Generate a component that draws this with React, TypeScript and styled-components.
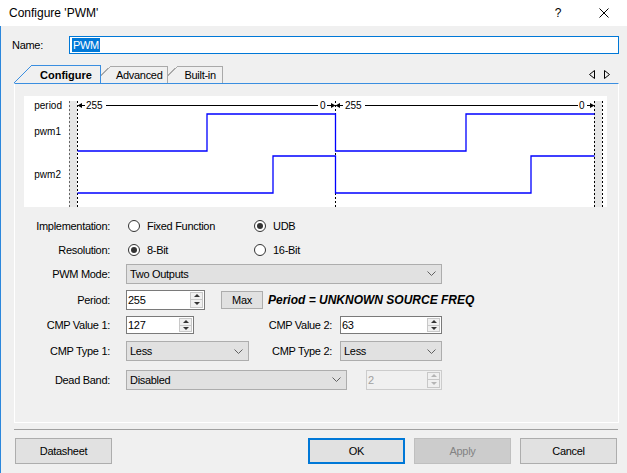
import styled, { createGlobalStyle } from "styled-components";

const GlobalStyle = createGlobalStyle`
  html, body {
    margin: 0;
    padding: 0;
    background: #f0f0f0;
  }
  body {
    font-family: "Liberation Sans", Arial, sans-serif;
    font-size: 11px;
    letter-spacing: -0.3px;
    color: #000;
  }
  * {
    box-sizing: border-box;
  }
`;

// Window frame
const Window = styled.div`
  width: 627px;
  height: 473px;
  display: flex;
  flex-direction: column;
  background: #f0f0f0;
  overflow: hidden;
`;

const TitleBar = styled.div`
  height: 26px;
  flex-shrink: 0;
  background: #fff;
  display: flex;
  align-items: center;
  padding-left: 9px;
`;

const Title = styled.div`
  flex: 1;
  font-size: 12px;
  letter-spacing: 0;
`;

const TitleButton = styled.div`
  width: 46px;
  height: 26px;
  display: flex;
  align-items: center;
  justify-content: center;
  font-size: 12px;
  letter-spacing: 0;
`;

const Body = styled.div`
  flex: 1;
  border-left: 1px solid #2b87dc;
  padding: 10px 8px 0 11px;
  display: flex;
  flex-direction: column;
`;

// Name field
const NameRow = styled.div`
  display: flex;
  align-items: center;
  height: 18px;
`;

const NameLabel = styled.span`
  width: 57px;
`;

const NameInput = styled.div`
  flex: 1;
  height: 18px;
  border: 1px solid #0078d7;
  background: #fff;
  display: flex;
  align-items: center;
  padding-left: 2px;
`;

const Selection = styled.span`
  background: #0078d7;
  color: #fff;
  padding: 0 1px;
  line-height: 14px;
`;

// Tabs
const TabRow = styled.div`
  margin-top: 11px;
  height: 18px;
  display: flex;
  align-items: flex-end;
  padding-left: 20px;
`;

const Tab = styled.div<{ $active?: boolean; $z: number; $pad: number }>`
  position: relative;
  z-index: ${(p) => p.$z};
  margin-left: ${(p) => (p.$active ? 0 : 10)}px;
  padding: 0 ${(p) => p.$pad}px;
  height: ${(p) => (p.$active ? 18 : 17)}px;
  border-top: 1px solid ${(p) => (p.$active ? "#3a8ee0" : "#a9a9a9")};
  border-right: 1px solid ${(p) => (p.$active ? "#3a8ee0" : "#a9a9a9")};
  background: #f0f0f0;
  display: flex;
  align-items: center;
  font-weight: ${(p) => (p.$active ? 700 : 400)};
  letter-spacing: ${(p) => (p.$active ? "0" : "-0.3px")};

  &::before {
    content: "";
    position: absolute;
    left: -18px;
    top: -1px;
    width: 18px;
    height: ${(p) => (p.$active ? 18 : 17)}px;
    background: linear-gradient(
      to top left,
      #f0f0f0 calc(50% - 0.6px),
      ${(p) => (p.$active ? "#3a8ee0" : "#a9a9a9")} calc(50% - 0.6px),
      ${(p) => (p.$active ? "#3a8ee0" : "#a9a9a9")} calc(50% + 0.6px),
      transparent calc(50% + 0.6px)
    );
  }
`;

const TabArrows = styled.div`
  margin-left: auto;
  align-self: center;
  display: flex;
  gap: 9px;
  padding-right: 9px;
`;

const Panel = styled.div`
  margin-left: 2px;
  height: 340px;
  border: 1px solid #fff;
  border-top-color: #3a8ee0;
  padding: 12px 10px 0 9px;
`;

// Waveform chart
const ChartBox = styled.div`
  width: 583px;
  height: 111px;
  background: #fff;

  svg {
    display: block;
  }
  text {
    font-family: "Liberation Sans", Arial, sans-serif;
    font-size: 10px;
    letter-spacing: 0;
    fill: #000;
  }
`;

// Form
const Form = styled.div`
  margin-top: 7px;
  display: flex;
  flex-direction: column;
`;

const FieldRow = styled.div<{ $h: number }>`
  height: ${(p) => p.$h}px;
  display: flex;
  align-items: center;
`;

const FieldLabel = styled.span`
  width: 86px;
  margin-right: 16px;
  text-align: right;
  white-space: nowrap;
`;

const SubLabel = styled.span<{ $w: number }>`
  width: ${(p) => p.$w}px;
  margin-right: 8px;
  text-align: right;
  white-space: nowrap;
`;

const Cell = styled.div<{ $w: number }>`
  width: ${(p) => p.$w}px;
  display: flex;
  align-items: center;
`;

const RadioItem = styled.label<{ $w?: number }>`
  display: flex;
  align-items: center;
  width: ${(p) => (p.$w ? `${p.$w}px` : "auto")};
`;

const Radio = styled.span<{ $checked?: boolean }>`
  width: 12px;
  height: 12px;
  border-radius: 50%;
  border: 1px solid #333;
  background: #fff;
  margin: 0 7px 0 2px;
  display: inline-flex;
  align-items: center;
  justify-content: center;

  &::after {
    content: "";
    width: 6px;
    height: 6px;
    border-radius: 50%;
    background: #333;
    display: ${(p) => (p.$checked ? "block" : "none")};
  }
`;

const Select = styled.div<{ $w: number }>`
  width: ${(p) => p.$w}px;
  height: 20px;
  border: 1px solid #adadad;
  background: #e1e1e1;
  display: flex;
  align-items: center;
  justify-content: space-between;
  padding: 0 5px 0 3px;
`;

const Spin = styled.div<{ $w: number; $h: number; $disabled?: boolean }>`
  width: ${(p) => p.$w}px;
  height: ${(p) => p.$h}px;
  border: 1px solid ${(p) => (p.$disabled ? "#cccccc" : "#7a7a7a")};
  background: ${(p) => (p.$disabled ? "#f0f0f0" : "#fff")};
  color: ${(p) => (p.$disabled ? "#a0a0a0" : "#000")};
  display: flex;
`;

const SpinText = styled.div`
  flex: 1;
  display: flex;
  align-items: center;
  padding-left: 1px;
`;

const SpinButtons = styled.div`
  width: 13px;
  margin: 1px 1px 1px 0;
  display: flex;
  flex-direction: column;
  border: 1px solid #c8c8c8;
  background: #f0f0f0;
`;

const SpinArrow = styled.div<{ $down?: boolean; $disabled?: boolean }>`
  flex: 1;
  display: flex;
  align-items: center;
  justify-content: center;

  & + & {
    border-top: 1px solid #c8c8c8;
  }

  &::after {
    content: "";
    border-left: 3px solid transparent;
    border-right: 3px solid transparent;
    ${(p) => (p.$down ? "border-top" : "border-bottom")}: 3px solid
      ${(p) => (p.$disabled ? "#b5b5b5" : "#333")};
  }
`;

const SmallButton = styled.div`
  width: 42px;
  height: 18px;
  margin-left: 16px;
  border: 1px solid #adadad;
  background: #e1e1e1;
  display: flex;
  align-items: center;
  justify-content: center;
`;

const Warning = styled.span`
  margin-left: 5px;
  font-size: 12px;
  font-weight: 700;
  font-style: italic;
  letter-spacing: 0;
  white-space: nowrap;
`;

// Footer
const Separator = styled.div`
  margin: 6px 1px 0 2px;
  height: 1px;
  background: #a0a0a0;
`;

const ButtonRow = styled.div`
  margin-top: 8px;
  display: flex;
  gap: 9px;
  padding: 0 2px 0 3px;
`;

const DialogButton = styled.div<{ $primary?: boolean; $disabled?: boolean }>`
  width: 97px;
  height: 26px;
  display: flex;
  align-items: center;
  justify-content: center;
  background: ${(p) => (p.$disabled ? "#cccccc" : "#e1e1e1")};
  border: ${(p) =>
    p.$primary ? "2px solid #0078d7" : p.$disabled ? "1px solid #bfbfbf" : "1px solid #adadad"};
  color: ${(p) => (p.$disabled ? "#838383" : "#000")};
`;

const Spacer = styled.div`
  flex: 1;
`;

function Chevron() {
  return (
    <svg width="9" height="5" viewBox="0 0 9 5">
      <polyline points="0.5,0.5 4.5,4.5 8.5,0.5" fill="none" stroke="#606060" strokeWidth="1" />
    </svg>
  );
}

function SpinBox({ value, w, h, disabled }: { value: string; w: number; h: number; disabled?: boolean }) {
  return (
    <Spin $w={w} $h={h} $disabled={disabled}>
      <SpinText>{value}</SpinText>
      <SpinButtons>
        <SpinArrow $disabled={disabled} />
        <SpinArrow $down $disabled={disabled} />
      </SpinButtons>
    </Spin>
  );
}

function Dropdown({ value, w }: { value: string; w: number }) {
  return (
    <Select $w={w}>
      <span>{value}</span>
      <Chevron />
    </Select>
  );
}

function Waveforms() {
  const dash = { strokeDasharray: "2 2", strokeWidth: 1 };
  return (
    <svg width="583" height="111" viewBox="0 0 583 111">
      <rect x="45" y="5" width="8" height="106" fill="#e6e6e6" />
      <rect x="570" y="5" width="8" height="106" fill="#e6e6e6" />
      <line x1="45.5" y1="5" x2="45.5" y2="111" stroke="#666" {...dash} />
      <line x1="53.5" y1="5" x2="53.5" y2="111" stroke="#000" {...dash} />
      <line x1="311.5" y1="5" x2="311.5" y2="111" stroke="#000" {...dash} />
      <line x1="570.5" y1="5" x2="570.5" y2="111" stroke="#000" {...dash} />
      <line x1="578.5" y1="5" x2="578.5" y2="111" stroke="#000" {...dash} />

      <text x="38" y="13" textAnchor="end">period</text>
      <text x="37" y="39" textAnchor="end">pwm1</text>
      <text x="37" y="82" textAnchor="end">pwm2</text>

      {/* period dimension line */}
      <g stroke="#000" strokeWidth="1">
        <line x1="57" y1="9.5" x2="61" y2="9.5" />
        <line x1="82" y1="9.5" x2="294" y2="9.5" />
        <line x1="303" y1="9.5" x2="308" y2="9.5" />
        <line x1="315" y1="9.5" x2="319" y2="9.5" />
        <line x1="341" y1="9.5" x2="554" y2="9.5" />
        <line x1="563" y1="9.5" x2="567" y2="9.5" />
      </g>
      <g fill="#000">
        <polygon points="53.5,9.5 58,7 58,12" />
        <polygon points="311.5,9.5 307,7 307,12" />
        <polygon points="311.5,9.5 316,7 316,12" />
        <polygon points="570.5,9.5 566,7 566,12" />
      </g>
      <text x="62" y="13">255</text>
      <text x="296" y="13">0</text>
      <text x="321" y="13">255</text>
      <text x="555" y="13">0</text>

      <g fill="none" stroke="#0000ff" strokeWidth="1.3">
        <path d="M53.5 55 H183 V18 H311.5 V55 H442 V18 H570.5" />
        <path d="M53.5 97 H249 V60 H311.5 V97 H507 V60 H570.5" />
      </g>
    </svg>
  );
}

export default function App() {
  return (
    <>
      <GlobalStyle />
      <Window>
        <TitleBar>
          <Title>Configure 'PWM'</Title>
          <TitleButton>?</TitleButton>
          <TitleButton>
            <svg width="10" height="10" viewBox="0 0 10 10">
              <path d="M0.5 0.5 L9.5 9.5 M9.5 0.5 L0.5 9.5" stroke="#000" strokeWidth="1" />
            </svg>
          </TitleButton>
        </TitleBar>
        <Body>
          <NameRow>
            <NameLabel>Name:</NameLabel>
            <NameInput>
              <Selection>PWM</Selection>
            </NameInput>
          </NameRow>

          <TabRow>
            <Tab $active $z={3} $pad={8}>Configure</Tab>
            <Tab $z={2} $pad={5}>Advanced</Tab>
            <Tab $z={1} $pad={6}>Built-in</Tab>
            <TabArrows>
              <svg width="6" height="9" viewBox="0 0 6 9">
                <polygon points="5.5,0.5 5.5,8.5 0.5,4.5" fill="none" stroke="#000" />
              </svg>
              <svg width="6" height="9" viewBox="0 0 6 9">
                <polygon points="0.5,0.5 0.5,8.5 5.5,4.5" fill="none" stroke="#000" />
              </svg>
            </TabArrows>
          </TabRow>

          <Panel>
            <ChartBox>
              <Waveforms />
            </ChartBox>

            <Form>
              <FieldRow $h={24}>
                <FieldLabel>Implementation:</FieldLabel>
                <RadioItem $w={126}>
                  <Radio />
                  Fixed Function
                </RadioItem>
                <RadioItem>
                  <Radio $checked />
                  UDB
                </RadioItem>
              </FieldRow>
              <FieldRow $h={24}>
                <FieldLabel>Resolution:</FieldLabel>
                <RadioItem $w={126}>
                  <Radio $checked />
                  8-Bit
                </RadioItem>
                <RadioItem>
                  <Radio />
                  16-Bit
                </RadioItem>
              </FieldRow>
              <FieldRow $h={23}>
                <FieldLabel>PWM Mode:</FieldLabel>
                <Dropdown value="Two Outputs" w={316} />
              </FieldRow>
              <FieldRow $h={29}>
                <FieldLabel>Period:</FieldLabel>
                <SpinBox value="255" w={79} h={20} />
                <SmallButton>Max</SmallButton>
                <Warning>Period = UNKNOWN SOURCE FREQ</Warning>
              </FieldRow>
              <FieldRow $h={22}>
                <FieldLabel>CMP Value 1:</FieldLabel>
                <Cell $w={123}>
                  <SpinBox value="127" w={68} h={18} />
                </Cell>
                <SubLabel $w={83}>CMP Value 2:</SubLabel>
                <SpinBox value="63" w={102} h={18} />
              </FieldRow>
              <FieldRow $h={30}>
                <FieldLabel>CMP Type 1:</FieldLabel>
                <Cell $w={123}>
                  <Dropdown value="Less" w={123} />
                </Cell>
                <SubLabel $w={83}>CMP Type 2:</SubLabel>
                <Dropdown value="Less" w={102} />
              </FieldRow>
              <FieldRow $h={27}>
                <FieldLabel>Dead Band:</FieldLabel>
                <Cell $w={240}>
                  <Dropdown value="Disabled" w={221} />
                </Cell>
                <SpinBox value="2" w={76} h={20} disabled />
              </FieldRow>
            </Form>
          </Panel>

          <Separator />

          <ButtonRow>
            <DialogButton>Datasheet</DialogButton>
            <Spacer />
            <DialogButton $primary>OK</DialogButton>
            <DialogButton $disabled>Apply</DialogButton>
            <DialogButton>Cancel</DialogButton>
          </ButtonRow>
        </Body>
      </Window>
    </>
  );
}
